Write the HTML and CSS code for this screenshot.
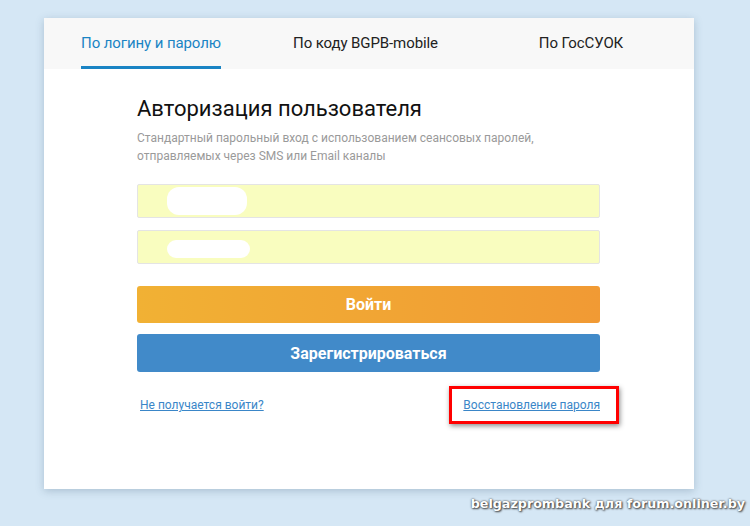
FILE: index.html
```html
<!DOCTYPE html>
<html lang="ru">
<head>
<meta charset="utf-8">
<link rel="stylesheet" href="styles.css">
</head>
<body>
<div class="page">
  <div class="card">
    <nav class="tabs">
      <div class="tab"><span class="tab-label active">По логину и паролю</span></div>
      <div class="tab"><span class="tab-label">По коду BGPB-mobile</span></div>
      <div class="tab"><span class="tab-label">По ГосСУОК</span></div>
    </nav>
    <div class="content">
      <h1 class="title">Авторизация пользователя</h1>
      <p class="subtitle">Стандартный парольный вход с использованием сеансовых паролей,<br>отправляемых через SMS или Email каналы</p>
      <div class="field"><span class="blot blot-1"></span></div>
      <div class="field"><span class="blot blot-2"></span></div>
      <button class="btn btn-login">Войти</button>
      <button class="btn btn-register">Зарегистрироваться</button>
      <div class="links">
        <a class="link" href="#">Не получается войти?</a>
        <span class="highlight"><a class="link" href="#">Восстановление пароля</a></span>
      </div>
    </div>
  </div>
  <div class="watermark">belgazprombank для forum.onliner.by</div>
</div>
</body>
</html>
```
FILE: styles.css
```css
html, body {
  margin: 0;
  padding: 0;
}
body {
  background: #d5e7f5;
  font-family: Roboto, "Noto Sans", sans-serif;
  width: 750px;
  height: 526px;
  overflow: hidden;
}
.page {
  padding: 18px 0 0 44px;
  display: flex;
  flex-direction: column;
}
.card {
  width: 650px;
  height: 471px;
  background: #fff;
  box-shadow: 0 2px 8px rgba(60, 90, 120, 0.28);
  display: flex;
  flex-direction: column;
}
.tabs {
  height: 51px;
  background: #f8f8f8;
  display: grid;
  grid-template-columns: 214px 215px 216px;
}
.tab {
  display: flex;
  justify-content: center;
  align-items: stretch;
}
.tab-label {
  font-size: 15px;
  color: #222;
  display: flex;
  align-items: center;
  padding-top: 2px;
  border-bottom: 3px solid transparent;
  letter-spacing: -0.1px;
}
.tab-label.active {
  color: #1a84c4;
  border-bottom-color: #1a84c4;
}
.content {
  padding: 25px 94px 0 93px;
  display: flex;
  flex-direction: column;
}
.title {
  margin: 0;
  font-size: 22px;
  font-weight: 400;
  line-height: 30px;
  color: #111;
}
.subtitle {
  margin: 5px 0 0;
  font-size: 12px;
  line-height: 18px;
  color: #9a9a9a;
}
.field {
  height: 32px;
  background: #f9fdbf;
  border: 1px solid #e4e4e4;
  border-radius: 2px;
  margin-top: 12px;
  display: flex;
  align-items: center;
  padding-left: 29px;
}
.content .field:first-of-type {
  margin-top: 19px;
}
.blot {
  display: block;
  background: #fff;
  border-radius: 12px;
}
.blot-1 {
  width: 80px;
  height: 28px;
}
.blot-2 {
  width: 83px;
  height: 18px;
  border-radius: 9px;
  margin-top: 3px;
}
.btn {
  border: none;
  border-radius: 3px;
  color: #fff;
  font-family: Roboto, "Noto Sans", sans-serif;
  font-weight: 700;
  font-size: 16px;
  height: 37px;
  padding: 0;
}
.btn-login {
  margin-top: 22px;
  background: linear-gradient(90deg, #f1b134 0%, #f19a34 100%);
}
.btn-register {
  margin-top: 11px;
  height: 38px;
  background: #418ac9;
}
.links {
  margin-top: 14px;
  display: flex;
  justify-content: space-between;
  align-items: center;
  padding-left: 3px;
  margin-right: -19px;
}
.link {
  font-size: 12px;
  color: #3a86c8;
  text-decoration: underline;
}
.highlight {
  border: 3px solid #f00;
  box-shadow: 1px 2px 5px rgba(0, 0, 0, 0.45);
  padding: 5px 16px 8px 11px;
}
.watermark {
  align-self: flex-end;
  margin: 7px 5px 0 0;
  font-family: "DejaVu Sans", Verdana, sans-serif;
  font-weight: 700;
  font-size: 12.7px;
  color: #fff;
  text-shadow: 0 0 2px #333, 1px 1px 2px #444;
}
```
